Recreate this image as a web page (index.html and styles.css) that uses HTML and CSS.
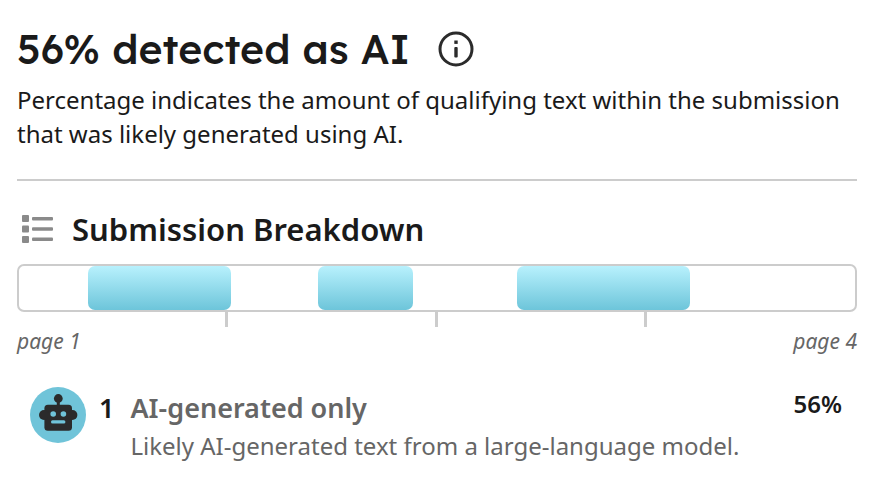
FILE: index.html
```html
<!DOCTYPE html>
<html lang="en">

<head>
  <meta charset="UTF-8" />
  <meta name="viewport" content="width=device-width, initial-scale=1.0" />
  <title>AI Writing Report</title>
  <link rel="stylesheet" href="styles.css">
</head>

<body>
  <main class="report">
    <header class="summary">
      <div class="title-row">
        <h1>56% detected as AI</h1>
        <button type="button" class="info-btn" aria-label="More information">
          <svg width="36" height="36" viewBox="0 0 36 36" fill="none">
            <circle cx="18" cy="18" r="16" stroke="#2b2b2b" stroke-width="3" />
            <rect x="16.3" y="9.5" width="3.4" height="3.4" fill="#2b2b2b" />
            <rect x="16.3" y="16" width="3.4" height="10.5" rx="1" fill="#2b2b2b" />
          </svg>
        </button>
      </div>
      <p>Percentage indicates the amount of qualifying text within the submission that was likely generated using AI.</p>
    </header>

    <section class="breakdown">
      <div class="section-head">
        <svg width="32" height="28" viewBox="0 0 32 28" fill="#8a8a8a" aria-hidden="true">
          <rect x="0" y="0" width="7" height="7" rx="1" />
          <rect x="0" y="10.5" width="7" height="7" rx="1" />
          <rect x="0" y="21" width="7" height="7" rx="1" />
          <rect x="10" y="2" width="21" height="3.4" rx="1" />
          <rect x="10" y="12.3" width="21" height="3.4" rx="1" />
          <rect x="10" y="22.6" width="21" height="3.4" rx="1" />
        </svg>
        <h2>Submission Breakdown</h2>
      </div>

      <div class="bar">
        <span class="segment" style="margin-left: 8.2%; width: 17.1%"></span>
        <span class="segment" style="margin-left: 10.5%; width: 11.3%"></span>
        <span class="segment" style="margin-left: 12.5%; width: 20.7%"></span>
      </div>
      <div class="ticks">
        <span></span>
        <span></span>
        <span></span>
        <span></span>
      </div>
      <div class="pages">
        <span>page 1</span>
        <span>page 4</span>
      </div>
    </section>

    <section class="group">
      <svg class="robot" width="56" height="56" viewBox="0 0 56 56" aria-hidden="true">
        <circle cx="28" cy="28" r="28" fill="#70c4d9" />
        <g fill="#2b2b2b">
          <circle cx="28.3" cy="11.5" r="4.4" />
          <rect x="26.8" y="12" width="3" height="8" />
          <rect x="14.4" y="17.7" width="27.6" height="26" rx="3.5" />
          <circle cx="14" cy="28" r="5" />
          <circle cx="42.4" cy="28" r="5" />
        </g>
        <g fill="#70c4d9">
          <circle cx="23.2" cy="27" r="2.8" />
          <circle cx="33.4" cy="27" r="2.8" />
          <rect x="21" y="33.2" width="14.4" height="3.2" rx="1.5" />
        </g>
      </svg>
      <span class="count">1</span>
      <div class="details">
        <h3>AI-generated only</h3>
        <p>Likely AI-generated text from a large-language model.</p>
      </div>
      <span class="percent">56%</span>
    </section>
  </main>
</body>

</html>
```
FILE: styles.css
```css
* {
  margin: 0;
  padding: 0;
  box-sizing: border-box;
}

body {
  font-family: "Noto Sans", sans-serif;
  color: #1a1a1a;
  background: #ffffff;
}

.report {
  padding: 24px 21px 24px 17px;
}

/* Summary */
.summary {
  padding-bottom: 28px;
  border-bottom: 2px solid #cccccc;
}

.title-row {
  display: flex;
  align-items: center;
  gap: 28px;
  height: 50px;
  margin-bottom: 9px;
}

h1 {
  font-family: Lexend, Inter, sans-serif;
  font-size: 41px;
  font-weight: 500;
  line-height: 50px;
}

.info-btn {
  display: flex;
  border: none;
  background: none;
  cursor: pointer;
}

.summary p {
  font-size: 24px;
  line-height: 34px;
}

/* Submission breakdown */
.section-head {
  display: flex;
  align-items: center;
  gap: 18px;
  padding-left: 5px;
  margin: 26px 0 13px;
}

h2 {
  font-size: 31px;
  font-weight: 600;
  line-height: 44px;
}

.bar {
  display: flex;
  height: 48px;
  border: 2px solid #cccccc;
  border-radius: 7px;
}

.segment {
  border-radius: 7px;
  background: linear-gradient(#b8f1fd, #6dc5da);
}

.ticks {
  display: grid;
  grid-template-columns: repeat(4, 1fr);
  height: 15px;
  padding-left: 1px;
}

.ticks span {
  border-right: 3px solid #cccccc;
}

.ticks span:last-child {
  border-right: none;
}

.pages {
  display: flex;
  justify-content: space-between;
  font-size: 21px;
  font-style: italic;
  line-height: 28px;
  color: #666666;
}

/* Detection group */
.group {
  display: flex;
  align-items: flex-start;
  padding: 0 15px 0 13px;
  margin-top: 32px;
}

.robot {
  flex-shrink: 0;
}

.count {
  margin: 0 16px 0 13px;
  font-size: 27px;
  font-weight: 600;
  line-height: 42px;
}

.details {
  flex: 1;
  color: #666666;
}

h3 {
  font-size: 27px;
  font-weight: 600;
  line-height: 42px;
}

.details p {
  font-size: 24px;
  line-height: 34px;
}

.percent {
  font-size: 24px;
  font-weight: 600;
  line-height: 34px;
}
```
